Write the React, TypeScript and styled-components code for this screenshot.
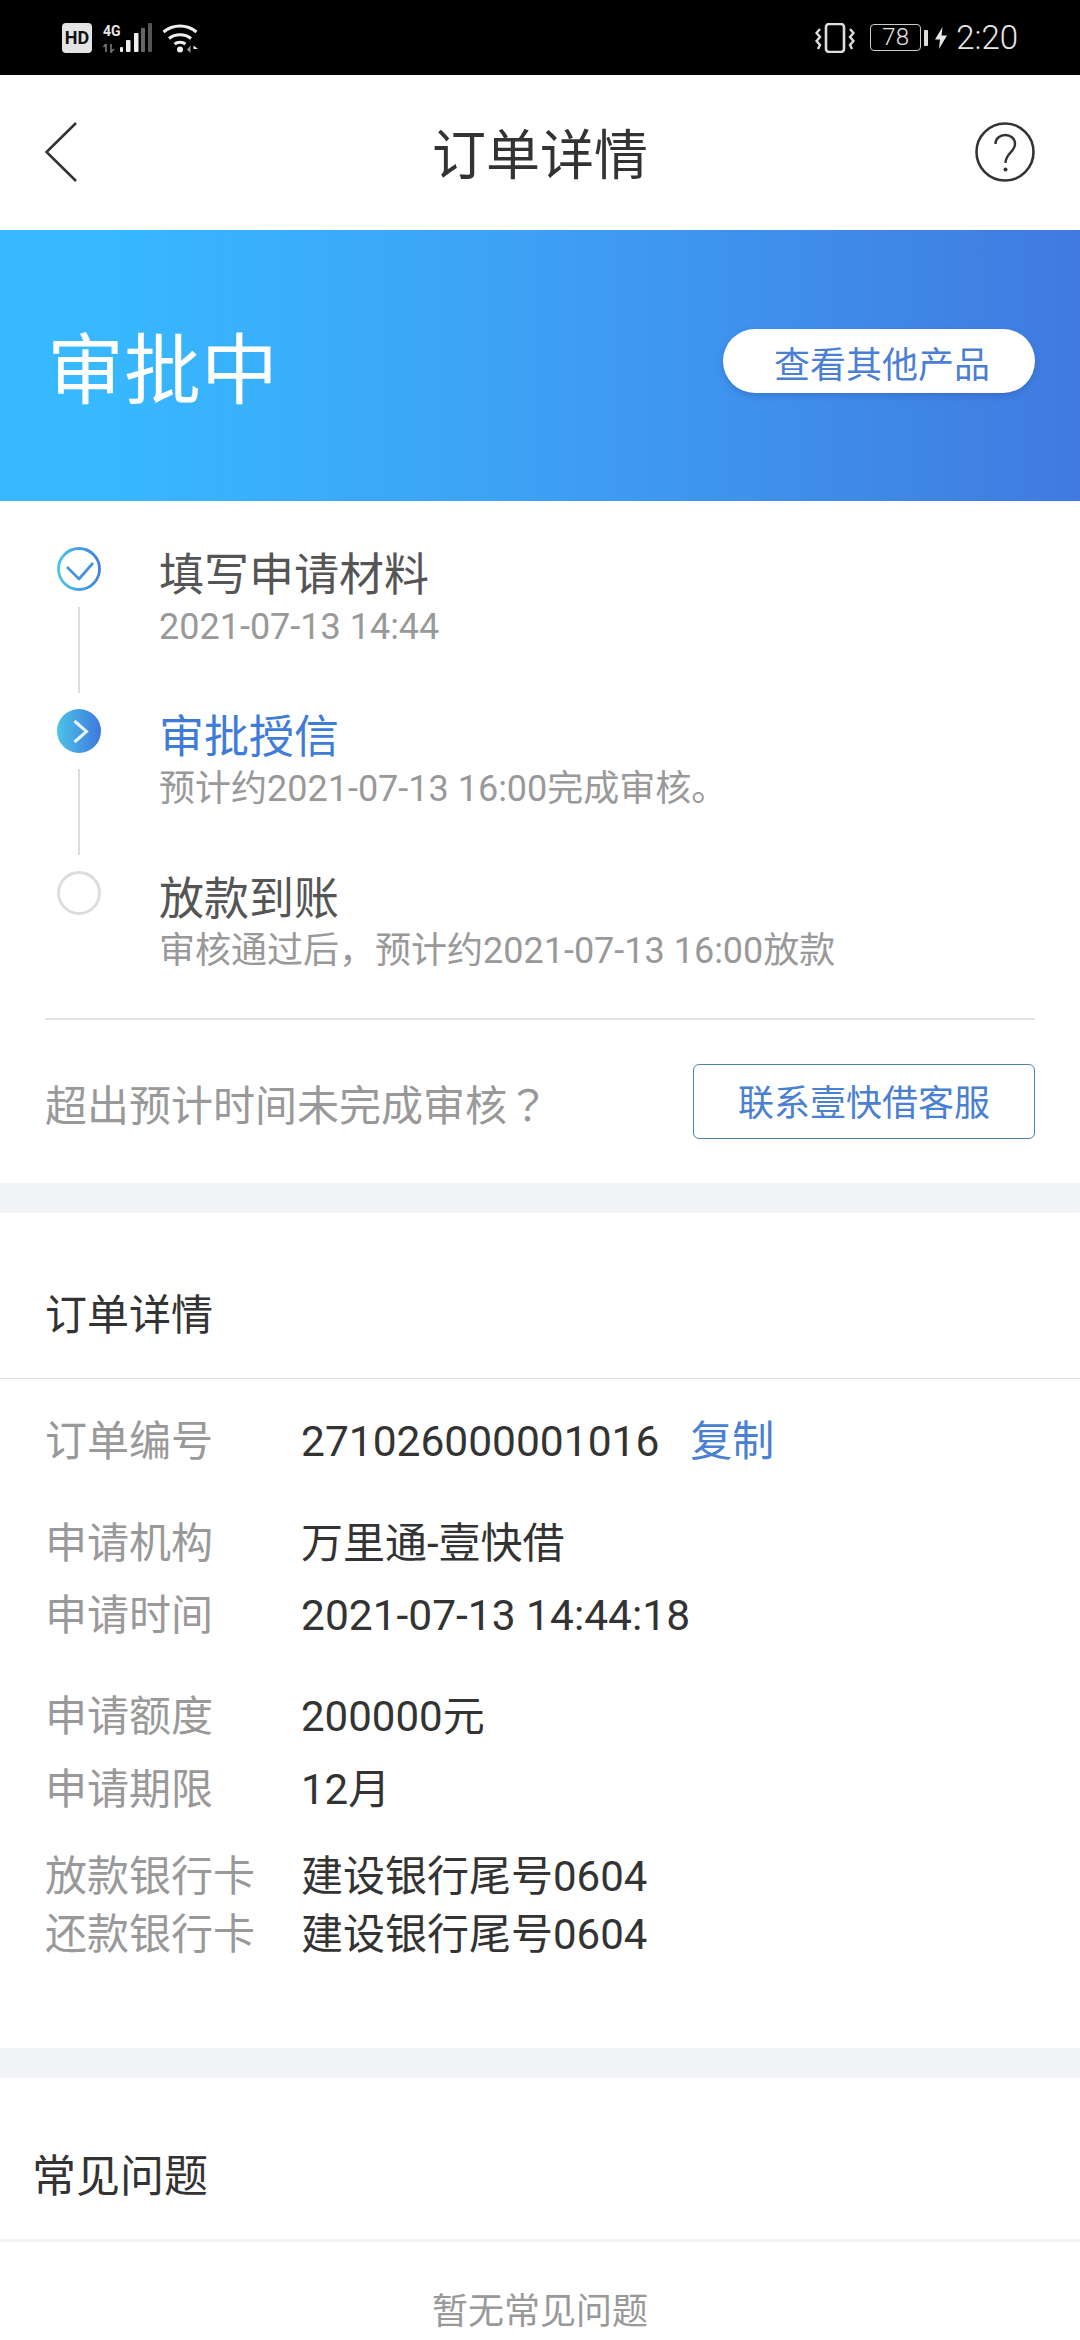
import React from 'react'
import styled, { createGlobalStyle } from 'styled-components'

const GlobalStyle = createGlobalStyle`
  html, body {
    margin: 0;
    padding: 0;
    background: #fff;
  }
  body {
    font-family: Roboto, "Noto Sans CJK SC", sans-serif;
  }
  * {
    box-sizing: border-box;
  }
`

const steps = [
  { state: 'done', title: '填写申请材料', sub: '2021-07-13 14:44' },
  { state: 'active', title: '审批授信', sub: '预计约2021-07-13 16:00完成审核。' },
  { state: 'todo', title: '放款到账', sub: '审核通过后，预计约2021-07-13 16:00放款' },
]

const details = [
  { label: '订单编号', value: '271026000001016', gap: 34, copy: true, numeric: true },
  { label: '申请机构', value: '万里通-壹快借', gap: 44 },
  { label: '申请时间', value: '2021-07-13 14:44:18', gap: 14, numeric: true },
  { label: '申请额度', value: '200000元', gap: 43 },
  { label: '申请期限', value: '12月', gap: 15 },
  { label: '放款银行卡', value: '建设银行尾号0604', gap: 29 },
  { label: '还款银行卡', value: '建设银行尾号0604', gap: 0 },
]

function StepIcon({ state }: { state: string }) {
  if (state === 'done') {
    return (
      <svg width="44" height="44" viewBox="0 0 44 44" fill="none">
        <defs>
          <linearGradient id="doneRing" x1="0" y1="0" x2="1" y2="0">
            <stop offset="0" stopColor="#4cc3ea" />
            <stop offset="1" stopColor="#4080dc" />
          </linearGradient>
        </defs>
        <circle cx="22" cy="22" r="20.5" stroke="url(#doneRing)" strokeWidth="2.8" />
        <path d="M10 20 L22 32 L36 16" stroke="#4a92dd" strokeWidth="2.8" strokeLinejoin="round" />
      </svg>
    )
  }
  if (state === 'active') {
    return (
      <svg width="44" height="44" viewBox="0 0 44 44" fill="none">
        <defs>
          <linearGradient id="activeFill" x1="0" y1="0" x2="1" y2="0">
            <stop offset="0" stopColor="#4cc3ea" />
            <stop offset="1" stopColor="#3f78dc" />
          </linearGradient>
        </defs>
        <circle cx="22" cy="22" r="22" fill="url(#activeFill)" />
        <path d="M17.5 12 L29.5 22.5 L17.5 33" stroke="#e8f6ff" strokeWidth="3" />
      </svg>
    )
  }
  return (
    <svg width="44" height="44" viewBox="0 0 44 44" fill="none">
      <circle cx="22" cy="22" r="20.5" stroke="#dcdcdc" strokeWidth="2.8" />
    </svg>
  )
}

function VibrateIcon() {
  return (
    <svg width="40" height="30" viewBox="0 0 40 30" fill="none" stroke="#dedede">
      <rect x="11" y="1" width="18" height="28" rx="3" strokeWidth="2.6" />
      <path d="M5 6 L1.5 10 L5 14 L1.5 18 L5 22 L3 26" strokeWidth="2.4" />
      <path d="M35 6 L38.5 10 L35 14 L38.5 18 L35 22 L37 26" strokeWidth="2.4" />
    </svg>
  )
}

function SignalIcon() {
  return (
    <svg width="50" height="30" viewBox="0 0 50 30">
      <text x="0" y="12.5" fontFamily="Roboto, sans-serif" fontSize="14" fontWeight="700" fill="#e6e6e6">
        4G
      </text>
      <path d="M3 21 L3 29 M3 21 L0.5 24 M8 21 L8 29 L11 26" stroke="#777" strokeWidth="1.6" fill="none" />
      <rect x="17" y="24" width="3" height="5" rx="1" fill="#eee" />
      <rect x="23" y="17" width="4.5" height="12" rx="1" fill="#eee" />
      <rect x="31" y="10" width="4.5" height="19" rx="1" fill="#eee" />
      <rect x="38" y="5" width="4" height="24" rx="1" fill="#666" />
      <rect x="45" y="0" width="4" height="29" rx="1" fill="#555" />
    </svg>
  )
}

function WifiIcon() {
  return (
    <svg width="37" height="30" viewBox="0 0 37 30" fill="none">
      <path d="M1.5 9 C11 1 25 1 34.5 9" stroke="#eee" strokeWidth="3" />
      <path d="M7 15.5 C13 10.5 23 10.5 29 15.5" stroke="#eee" strokeWidth="3" />
      <path d="M12.5 21 C15.5 18.5 20.5 18.5 23.5 21" stroke="#eee" strokeWidth="3" />
      <circle cx="18" cy="26.5" r="3" fill="#eee" />
      <path d="M25 26.5 L28.5 22.5 L28.5 30 Z" fill="#999" />
      <path d="M31.5 22.5 L36 26 L31.5 26 L31.5 30 Z" fill="#eee" />
    </svg>
  )
}

function BoltIcon() {
  return (
    <svg width="12" height="22" viewBox="0 0 12 22">
      <path d="M7.5 0 L0 12.5 L5 12.5 L4 22 L12 8.5 L6.5 8.5 Z" fill="#e8e8e8" />
    </svg>
  )
}

export default function App() {
  return (
    <S.Page>
      <GlobalStyle />
      <S.StatusBar>
        <S.StatusGroup>
          <S.HdBadge>HD</S.HdBadge>
          <S.SignalWrap>
            <SignalIcon />
          </S.SignalWrap>
          <WifiIcon />
        </S.StatusGroup>
        <S.StatusGroup>
          <VibrateIcon />
          <S.Battery>78</S.Battery>
          <S.BatteryNub />
          <S.BoltWrap>
            <BoltIcon />
          </S.BoltWrap>
          <S.Clock>2:20</S.Clock>
        </S.StatusGroup>
      </S.StatusBar>

      <S.NavBar>
        <S.NavSide>
          <svg width="32" height="60" viewBox="0 0 32 60" fill="none">
            <path d="M31 1 L1.5 30 L31 59" stroke="#333" strokeWidth="2.6" />
          </svg>
        </S.NavSide>
        <S.NavTitle>订单详情</S.NavTitle>
        <S.NavSide $right>
          <svg width="60" height="60" viewBox="0 0 60 60" fill="none">
            <circle cx="30" cy="30" r="28.5" stroke="#333" strokeWidth="2.6" />
            <path d="M20.5 22 C20.5 10 40 10 40 22 C40 30 30.5 31 30.5 41" stroke="#333" strokeWidth="2.4" />
            <circle cx="30.5" cy="47.5" r="2" fill="#333" />
          </svg>
        </S.NavSide>
      </S.NavBar>

      <S.Banner>
        <S.BannerTitle>审批中</S.BannerTitle>
        <S.PillButton>查看其他产品</S.PillButton>
      </S.Banner>

      <S.StepList>
        {steps.map((step, i) => (
          <S.Step key={step.title}>
            <S.Rail>
              <StepIcon state={step.state} />
              {i < steps.length - 1 && <S.RailLine />}
            </S.Rail>
            <div>
              <S.StepTitle $active={step.state === 'active'}>{step.title}</S.StepTitle>
              <S.StepSub>{step.sub}</S.StepSub>
            </div>
          </S.Step>
        ))}
      </S.StepList>

      <S.Contact>
        <S.ContactText>
          超出预计时间未完成审核<S.QuestionMark>？</S.QuestionMark>
        </S.ContactText>
        <S.ContactButton>联系壹快借客服</S.ContactButton>
      </S.Contact>

      <S.Gap />

      <S.SectionHead>订单详情</S.SectionHead>
      <S.Details>
        {details.map(d => (
          <S.DetailRow key={d.label} $gap={d.gap}>
            <S.DetailLabel>{d.label}</S.DetailLabel>
            <S.DetailValue $numeric={d.numeric}>{d.value}</S.DetailValue>
            {d.copy && <S.CopyLink>复制</S.CopyLink>}
          </S.DetailRow>
        ))}
      </S.Details>

      <S.Gap />

      <S.FaqHead>常见问题</S.FaqHead>
      <S.FaqEmpty>暂无常见问题</S.FaqEmpty>
    </S.Page>
  )
}

const S = {
  Page: styled.div`
    width: 1080px;
    height: 2340px;
    overflow: hidden;
    background: #fff;
  `,

  StatusBar: styled.div`
    height: 75px;
    background: #000;
    display: flex;
    justify-content: space-between;
    align-items: center;
    padding: 0 62px 0 62px;
    color: #e6e6e6;
  `,

  StatusGroup: styled.div`
    display: flex;
    align-items: center;
  `,

  HdBadge: styled.span`
    width: 30px;
    height: 30px;
    border-radius: 4px;
    background: #e4e4e4;
    color: #111;
    font-size: 18px;
    font-weight: 700;
    line-height: 30px;
    text-align: center;
  `,

  SignalWrap: styled.span`
    display: flex;
    margin: 0 9px 0 11px;
  `,

  Battery: styled.span`
    width: 51px;
    height: 27px;
    margin-left: 15px;
    border: 1.5px solid #ccc;
    border-radius: 4px;
    font-size: 24px;
    font-weight: 300;
    line-height: 24px;
    text-align: center;
  `,

  BatteryNub: styled.span`
    width: 4px;
    height: 16px;
    margin-left: 3px;
    border-radius: 1px;
    background: #ddd;
  `,

  BoltWrap: styled.span`
    display: flex;
    margin: 0 9px 0 7px;
  `,

  Clock: styled.span`
    font-size: 33px;
    font-weight: 300;
    line-height: 36px;
  `,

  NavBar: styled.div`
    height: 155px;
    display: grid;
    grid-template-columns: 1fr auto 1fr;
    align-items: center;
    padding: 0 45px;
  `,

  NavSide: styled.div<{ $right?: boolean }>`
    display: flex;
    justify-content: ${p => (p.$right ? 'flex-end' : 'flex-start')};
    margin-top: -2px;
  `,

  NavTitle: styled.div`
    padding-top: 8px;
    font-size: 54px;
    line-height: 64px;
    color: #333;
  `,

  Banner: styled.div`
    height: 271px;
    display: flex;
    justify-content: space-between;
    align-items: center;
    padding: 0 45px 0 47px;
    background: linear-gradient(90deg, #37b8ff 10%, #3ea0f4 50%, #407ae0 100%);
  `,

  BannerTitle: styled.div`
    padding-top: 12px;
    font-size: 77px;
    line-height: 90px;
    color: #fff;
  `,

  PillButton: styled.div`
    width: 312px;
    height: 64px;
    margin-bottom: 9px;
    padding-left: 6px;
    border-radius: 32px;
    background: #fff;
    box-shadow: 0 3px 6px rgba(40, 80, 160, 0.35);
    color: #4a7fd4;
    font-size: 36px;
    line-height: 74px;
    text-align: center;
  `,

  StepList: styled.div`
    padding: 46px 45px 0 57px;
  `,

  Step: styled.div`
    display: flex;
    gap: 58px;
    height: 162px;

    &:last-child {
      height: 147px;
    }
  `,

  Rail: styled.div`
    width: 44px;
    display: flex;
    flex-direction: column;
    align-items: center;
  `,

  RailLine: styled.div`
    width: 2px;
    flex: 1;
    margin: 16px 0;
    background: #dcdcdc;
  `,

  StepTitle: styled.div<{ $active?: boolean }>`
    font-size: 45px;
    line-height: 58px;
    color: ${p => (p.$active ? '#3f7cd8' : '#555')};
  `,

  StepSub: styled.div`
    margin-top: -2px;
    font-size: 36px;
    line-height: 48px;
    color: #999;
  `,

  Contact: styled.div`
    height: 165px;
    margin: 0 45px;
    border-top: 2px solid #e4e4e6;
    display: flex;
    justify-content: space-between;
    align-items: center;
  `,

  ContactText: styled.div`
    padding-top: 6px;
    font-size: 42px;
    line-height: 50px;
    color: #999;
  `,

  QuestionMark: styled.span`
    font-family: "Noto Sans CJK TC", sans-serif;
  `,

  ContactButton: styled.div`
    width: 342px;
    height: 75px;
    border: 1.5px solid #4a82b4;
    border-radius: 6px;
    color: #4a80d2;
    font-size: 36px;
    line-height: 78px;
    text-align: center;
  `,

  Gap: styled.div`
    height: 30px;
    background: #f1f3f6;
  `,

  SectionHead: styled.div`
    height: 166px;
    padding: 0 45px;
    border-bottom: 1.5px solid #dedede;
    font-size: 42px;
    line-height: 206px;
    color: #333;
  `,

  Details: styled.div`
    padding: 0 0 84px 45px;
  `,

  DetailRow: styled.div<{ $gap: number }>`
    display: flex;
    align-items: center;
    height: 58px;
    margin-top: ${p => p.$gap}px;
    font-size: 42px;
    line-height: 58px;
  `,

  DetailLabel: styled.div`
    width: 256px;
    color: #999;
  `,

  DetailValue: styled.div<{ $numeric?: boolean }>`
    font-size: ${p => (p.$numeric ? '42.5px' : '42px')};
    color: #333;
  `,

  CopyLink: styled.div`
    margin-left: 31px;
    color: #4a80d2;
  `,

  FaqHead: styled.div`
    height: 164px;
    padding: 0 32px;
    border-bottom: 3px solid #f3f3f5;
    font-size: 44px;
    line-height: 198px;
    color: #333;
  `,

  FaqEmpty: styled.div`
    padding-top: 48px;
    font-size: 36px;
    line-height: 44px;
    color: #999;
    text-align: center;
  `,
}
